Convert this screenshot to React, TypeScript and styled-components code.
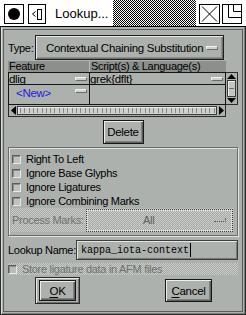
import React from "react";
import styled, { createGlobalStyle } from "styled-components";

const BG = "#adb1ad";

const Global = createGlobalStyle`
  html, body { margin: 0; padding: 0; background: ${BG}; }
  body { width: 246px; height: 315px; overflow: hidden; font-family: "Liberation Sans", Arial, sans-serif; }
  * { box-sizing: border-box; }
`;

const Window = styled.div`
  width: 246px;
  height: 315px;
  display: flex;
  flex-direction: column;
  background: ${BG};
  font-size: 11px;
  letter-spacing: -0.3px;
  color: #000;
`;

const TitleBar = styled.div`
  height: 27px;
  flex: none;
  background: #fff;
  border-bottom: 1px solid #000;
  display: flex;
  align-items: flex-start;
  padding: 4px 4px 0 4px;
`;

const TitleBox = styled.div<{ $w: number; $ml?: number }>`
  width: ${(p) => p.$w}px;
  height: 20px;
  margin-left: ${(p) => p.$ml ?? 0}px;
  border: 1px solid #000;
  background: #fff;
  display: flex;
  align-items: center;
  justify-content: center;
  flex: none;
`;

const Dot = styled.div`
  width: 12px;
  height: 12px;
  border-radius: 50%;
  background: #000;
`;

const Title = styled.div`
  width: 58px;
  margin-left: 9px;
  font-size: 13px;
  letter-spacing: 0;
  line-height: 19px;
  flex: none;
`;

const TitleStipple = styled.div`
  flex: 1;
  align-self: stretch;
  margin: -4px 3px 0 0;
  background: repeating-conic-gradient(#000 0 25%, #fff 0 50%) 0 0 / 2px 2px;
`;

const Frame = styled.div`
  flex: 1;
  display: flex;
  padding: 2px;
  border: 1px solid #2a2c2a;
  border-top: none;
  box-shadow: inset 1px 0 0 #dfe1df, inset -1px -1px 0 #7c7f7c;
`;

const Inner = styled.div`
  flex: 1;
  display: flex;
  flex-direction: column;
  border: 1px solid #5a5d5a;
  padding: 5px 4px 0 4px;
`;

const TypeRow = styled.div`
  height: 25px;
  display: flex;
  align-items: center;
`;

const Label = styled.div<{ $w: number }>`
  width: ${(p) => p.$w}px;
  flex: none;
  white-space: nowrap;
`;

const Dropdown = styled.div`
  width: 189px;
  height: 25px;
  border: 1px solid #1e1f1e;
  box-shadow: inset 1px 1px 0 #e6e8e6, inset -1px -1px 0 #6e716e, inset -2px -2px 0 #8c8f8c;
  display: flex;
  align-items: center;
  justify-content: space-between;
  padding: 0 5px 0 10px;
  font-size: 11.5px;
  white-space: nowrap;
`;

const Indicator = styled.div<{ $mr?: number }>`
  width: 12px;
  height: 4px;
  flex: none;
  margin-right: ${(p) => p.$mr ?? 0}px;
  background: #cfd2cf;
  border-top: 1px solid #f0f2f0;
  border-left: 1px solid #f0f2f0;
  border-bottom: 1px solid #6a6d6a;
  border-right: 1px solid #6a6d6a;
`;

const Table = styled.div`
  margin-top: 1px;
  display: grid;
  grid-template-columns: 218px 12px;
  grid-template-rows: 11px 33px 12px;
`;

const Header = styled.div`
  background: #8c8f8c;
  display: grid;
  grid-template-columns: 82px 1fr;
  line-height: 11px;
`;

const HeaderCell = styled.div<{ $sep?: boolean }>`
  padding-left: 1px;
  white-space: nowrap;
  overflow: hidden;
  border-right: ${(p) => (p.$sep ? "1px solid #b8bbb8" : "none")};
`;

const RowsBox = styled.div`
  border: 1px solid #141514;
  display: grid;
  grid-template-columns: 81px 1fr;
  grid-template-rows: 12px 1fr;
`;

const Cell = styled.div<{ $right?: boolean; $bottom?: boolean; $pl?: number; $blue?: boolean }>`
  border-right: ${(p) => (p.$right ? "1px solid #141514" : "none")};
  border-bottom: ${(p) => (p.$bottom ? "1px solid #141514" : "none")};
  padding-left: ${(p) => p.$pl ?? 0}px;
  display: flex;
  align-items: flex-start;
  justify-content: space-between;
  line-height: 12px;
  height: 100%;
  color: ${(p) => (p.$blue ? "#1a1ae6" : "#000")};
  white-space: nowrap;
  font-size: 11.5px;
`;

const CellText = styled.span<{ $mt?: number }>`
  margin-top: ${(p) => p.$mt ?? 0}px;
`;

const CellInd = styled.div<{ $mt: number }>`
  margin-top: ${(p) => p.$mt}px;
  margin-right: 2px;
`;

const VScroll = styled.div`
  border: 1px solid #2a2b2a;
  border-left: none;
  display: flex;
  flex-direction: column;
  background: ${BG};
`;

const Arrow = styled.div`
  height: 7px;
  flex: none;
  display: flex;
  align-items: center;
  justify-content: center;
`;

const VThumb = styled.div`
  flex: 1;
  border: 1px solid #3a3b3a;
  margin: 0 1px;
  background: #c3c6c3;
  box-shadow: inset 1px 1px 0 #eceeec;
  display: flex;
  align-items: center;
  justify-content: center;
`;

const VGrip = styled.div`
  width: 5px;
  height: 1px;
  background: #6b6e6b;
`;

const HScroll = styled.div`
  display: flex;
  border: 1px solid #2a2b2a;
  border-top: none;
  height: 12px;
`;

const HArrow = styled.div`
  width: 8px;
  flex: none;
  display: flex;
  align-items: center;
  justify-content: center;
`;

const HThumb = styled.div`
  flex: 1;
  margin: 1px 0;
  border: 1px solid #3a3b3a;
  background: repeating-linear-gradient(90deg, transparent 0 2px, #858885 2px 3px, transparent 3px 4.3px) center / 100% 5px no-repeat, #cdd0cd;
  box-shadow: inset 1px 1px 0 #eceeec;
`;

const Button = styled.div<{ $w: number; $h: number }>`
  width: ${(p) => p.$w}px;
  height: ${(p) => p.$h}px;
  border: 1px solid #161716;
  box-shadow: inset 1px 1px 0 #eceeec, inset -1px -1px 0 #5e615e, inset -2px -2px 0 #7f827f;
  display: flex;
  align-items: center;
  justify-content: center;
  font-size: 11.5px;
  flex: none;
`;

const DeleteButton = styled(Button)`
  margin-top: 3px;
  align-self: center;
  padding-bottom: 1px;
`;

const Group = styled.div`
  margin-top: 3px;
  height: 89px;
  border: 1px solid #6a6d6a;
  box-shadow: inset 1px 1px 0 #e2e4e2, 1px 1px 0 #e2e4e2;
  padding: 4px 4px 3px 2px;
  display: flex;
  flex-direction: column;
`;

const CheckRow = styled.div`
  height: 14px;
  display: flex;
  align-items: center;
  padding-left: 1px;
  white-space: nowrap;
`;

const Check = styled.div<{ $disabled?: boolean }>`
  width: 9px;
  height: 9px;
  flex: none;
  margin-right: 5px;
  background: ${(p) => (p.$disabled ? "#b9bcb9" : "#bfc2bf")};
  border-top: 1px solid #5a5d5a;
  border-left: 1px solid #5a5d5a;
  border-bottom: 1px solid #e6e8e6;
  border-right: 1px solid #e6e8e6;
  box-shadow: inset 1px 1px 0 #8a8d8a;
`;

const stipple = `repeating-conic-gradient(#c9ccc9 0 25%, #a6aaa6 0 50%) 0 0 / 2px 2px`;

const ProcessRow = styled.div`
  height: 24px;
  background: ${stipple};
  display: flex;
  align-items: center;
  padding-left: 1px;
  color: #6f726f;
`;

const DisabledSelect = styled.div`
  flex: 1;
  height: 23px;
  margin-left: 2px;
  border: 1px dotted #3c3d3c;
  outline: 1px dotted #e8eae8;
  outline-offset: -2px;
  display: flex;
  align-items: center;
  justify-content: space-between;
  padding: 0 6px 0 56px;
  color: #5e615e;
`;

const DottedInd = styled.div`
  width: 12px;
  height: 4px;
  border-bottom: 1px dotted #5e615e;
  border-right: 1px dotted #5e615e;
`;

const NameRow = styled.div`
  margin-top: 4px;
  height: 20px;
  display: flex;
  align-items: center;
`;

const TextField = styled.div`
  flex: 1;
  height: 20px;
  border: 1px solid #3c3d3c;
  box-shadow: inset 1px 1px 0 #e4e6e4, inset -1px -1px 0 #767976;
  display: flex;
  align-items: center;
  padding-left: 4px;
  font-family: "Liberation Mono", "Courier New", monospace;
  font-size: 10px;
  letter-spacing: 0;
`;

const Caret = styled.span`
  width: 1px;
  height: 14px;
  background: #000;
  margin-left: 1px;
`;

const StoreRow = styled.div`
  margin-top: 3px;
  height: 12px;
  background: ${stipple};
  display: flex;
  align-items: center;
  color: #6f726f;
  white-space: nowrap;
`;

const ButtonRow = styled.div`
  margin-top: 2px;
  height: 27px;
  display: flex;
  align-items: center;
  justify-content: space-between;
  padding: 0 26px 0 27px;
`;

const DefaultRing = styled.div`
  width: 45px;
  height: 27px;
  border: 1px solid #2a2b2a;
  box-shadow: inset 1px 1px 0 #e6e8e6, inset -1px -1px 0 #6e716e;
  padding: 2px 3px;
  display: flex;
`;

const U = styled.span`
  text-decoration: underline;
  text-underline-offset: 2px;
`;

export default function App() {
  return (
    <>
      <Global />
      <Window>
        <TitleBar>
          <TitleBox $w={20}>
            <Dot />
          </TitleBox>
          <TitleBox $w={18} $ml={4}>
            <svg width="16" height="18" viewBox="0 0 16 18">
              <polyline points="6.5,6.5 3.5,9 6.5,11.5" fill="none" stroke="#000" strokeWidth="1" />
              <rect x="8.5" y="4.5" width="4" height="10" fill="none" stroke="#000" strokeWidth="1" />
            </svg>
          </TitleBox>
          <Title>Lookup...</Title>
          <TitleStipple />
          <TitleBox $w={21}>
            <svg width="19" height="18" viewBox="0 0 19 18">
              <path d="M2 1.5 L17 16.5 M17 1.5 L2 16.5" stroke="#000" strokeWidth="1" />
            </svg>
          </TitleBox>
          <TitleBox $w={20} $ml={2}>
            <svg width="18" height="18" viewBox="0 0 18 18">
              <path d="M5.5 0 V12.5 H18 M10.5 0 V6.5 H18" fill="none" stroke="#000" strokeWidth="1" />
            </svg>
          </TitleBox>
        </TitleBar>
        <Frame>
          <Inner>
            <TypeRow>
              <Label $w={27}>Type:</Label>
              <Dropdown>
                <span>Contextual Chaining Substitution</span>
                <Indicator />
              </Dropdown>
            </TypeRow>
            <Table>
              <Header>
                <HeaderCell $sep>Feature</HeaderCell>
                <HeaderCell>Script(s) &amp; Language(s)</HeaderCell>
              </Header>
              <div />
              <RowsBox>
                <Cell $right $bottom>
                  <CellText>dlig</CellText>
                  <CellInd $mt={4}>
                    <Indicator />
                  </CellInd>
                </Cell>
                <Cell $bottom>
                  <CellText>grek{"{dflt}"}</CellText>
                  <CellInd $mt={4}>
                    <Indicator />
                  </CellInd>
                </Cell>
                <Cell $right $pl={7} $blue>
                  <CellText $mt={2}>&lt;New&gt;</CellText>
                  <CellInd $mt={4}>
                    <Indicator />
                  </CellInd>
                </Cell>
                <Cell />
              </RowsBox>
              <VScroll>
                <Arrow>
                  <svg width="9" height="5" viewBox="0 0 9 5">
                    <polygon points="4.5,0 9,5 0,5" fill="#000" />
                  </svg>
                </Arrow>
                <VThumb>
                  <VGrip />
                </VThumb>
                <Arrow>
                  <svg width="9" height="5" viewBox="0 0 9 5">
                    <polygon points="0,0 9,0 4.5,5" fill="#000" />
                  </svg>
                </Arrow>
              </VScroll>
              <HScroll>
                <HArrow>
                  <svg width="5" height="9" viewBox="0 0 5 9">
                    <polygon points="5,0 5,9 0,4.5" fill="#000" />
                  </svg>
                </HArrow>
                <HThumb />
                <HArrow>
                  <svg width="5" height="9" viewBox="0 0 5 9">
                    <polygon points="0,0 0,9 5,4.5" fill="#000" />
                  </svg>
                </HArrow>
              </HScroll>
              <div />
            </Table>
            <DeleteButton $w={41} $h={24}>Delete</DeleteButton>
            <Group>
              <CheckRow>
                <Check />
                Right To Left
              </CheckRow>
              <CheckRow>
                <Check />
                Ignore Base Glyphs
              </CheckRow>
              <CheckRow>
                <Check />
                Ignore Ligatures
              </CheckRow>
              <CheckRow>
                <Check />
                Ignore Combining Marks
              </CheckRow>
              <ProcessRow>
                <Label $w={72}>Process Marks:</Label>
                <DisabledSelect>
                  <span>All</span>
                  <DottedInd />
                </DisabledSelect>
              </ProcessRow>
            </Group>
            <NameRow>
              <Label $w={68}>Lookup Name:</Label>
              <TextField>
                kappa_iota-context
                <Caret />
              </TextField>
            </NameRow>
            <StoreRow>
              <Check $disabled />
              Store ligature data in AFM files
            </StoreRow>
            <ButtonRow>
              <DefaultRing>
                <Button $w={37} $h={21}>
                  <U>O</U>K
                </Button>
              </DefaultRing>
              <Button $w={47} $h={23}>
                <U>C</U>ancel
              </Button>
            </ButtonRow>
          </Inner>
        </Frame>
      </Window>
    </>
  );
}
